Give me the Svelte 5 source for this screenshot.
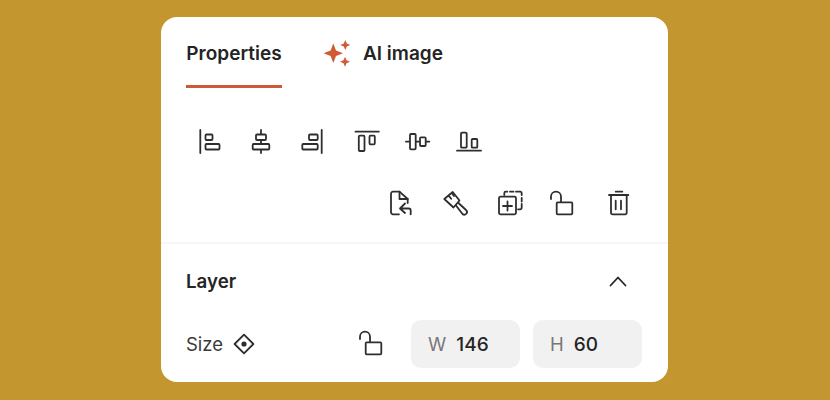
<script>
  const alignIcons = [
    { line: 'M4.3 2v23', rects: [[9.5, 6.5, 7, 5.5], [9.5, 16, 14, 5.5]] },
    { line: 'M14 2v23', rects: [[9, 6.5, 10, 5.5], [5.7, 16, 16.6, 5.5]] },
    { line: 'M23.7 2v23', rects: [[11, 6.5, 8.7, 5.5], [4.3, 16, 15.4, 5.5]] },
    { line: 'M2.5 3.7h23.3', rects: [[5.8, 7.7, 5.7, 15.3], [16.5, 7.7, 5.3, 8.6]] },
    { line: 'M2 13.7h23.3', rects: [[6, 6, 5.7, 15.3], [16, 9.3, 5.7, 8.7]] },
    { line: 'M2 22.7h24', rects: [[6, 4.7, 5.7, 15], [16.7, 11, 5.6, 8.7]] }
  ];
</script>

<div class="card">
  <div class="tabs">
    <div class="tab active">Properties</div>
    <div class="tab ai">
      <svg width="30" height="28" viewBox="0 0 30 28">
        <path class="spark" d="M10.3 4.6 13 11.6 20 14.3 13 17 10.3 24 7.6 17 .6 14.3 7.6 11.6Z" />
        <path class="spark" d="M22.3 1 23.8 4.5 27.3 6 23.8 7.5 22.3 11 20.8 7.5 17.3 6 20.8 4.5Z" />
        <path class="spark" d="M22 17.7 23.5 21.2 27 22.7 23.5 24.2 22 27.7 20.5 24.2 17 22.7 20.5 21.2Z" />
      </svg>
      <span>AI image</span>
    </div>
  </div>

  <div class="tools">
    <div class="align-row">
      {#each alignIcons as icon}
        <svg class="icon" viewBox="0 0 28 28">
          <path d={icon.line} />
          {#each icon.rects as r}
            <rect x={r[0]} y={r[1]} width={r[2]} height={r[3]} rx="1" />
          {/each}
        </svg>
      {/each}
    </div>
    <div class="action-row">
      <svg class="icon" viewBox="0 0 28 28">
        <path d="M13 24.3H7a2 2 0 0 1-2-2V3.7a2 2 0 0 1 2-2h6.5l8.2 7.3V13" />
        <path d="M13.5 1.7V9h8.2" />
        <path d="M24.7 24.3v-3.8a2 2 0 0 0-2-2H14M19 13.5l-5 5 5 4.5" />
      </svg>
      <svg class="icon" viewBox="0 0 28 28">
        <path d="M3.3 9 11.7 2l6.8 8.5-6 7Z" />
        <path d="m7.6 5.6 2.6 3.2M11.4 4l1.6 2" />
        <path d="m17.5 13 7.5 7a2.5 2.5 0 0 1-3.5 4L15 15.5" />
      </svg>
      <svg class="icon" viewBox="0 0 28 28">
        <rect x="3" y="6.7" width="17" height="17.6" rx="1.5" />
        <path d="M11.5 11.5v9M7 16h9" />
        <path d="M8.3 5V3.2a1.5 1.5 0 0 1 1.5-1.5h1.5M14 1.7h3.5M20 1.7h4.2a1.5 1.5 0 0 1 1.5 1.5V5M25.7 8v3.5M25.7 14v3.8a1.5 1.5 0 0 1-1.5 1.5H22" />
      </svg>
      <svg class="icon unlock" viewBox="0 0 28 28">
        <path d="M3 9V6.7a5 5 0 0 1 10 0v5.6" />
        <rect x="8.7" y="12.3" width="15.6" height="12" rx="1" />
      </svg>
      <svg class="icon trash" viewBox="0 0 28 28">
        <path d="M5 5h19.3M11.7 1.7h6.6M11.7 10.7v8.6M17 10.7v8.6" />
        <path d="M7 5v17.8a1.5 1.5 0 0 0 1.5 1.5h12.7a1.5 1.5 0 0 0 1.5-1.5V5" />
      </svg>
    </div>
  </div>

  <div class="layer">
    <div class="layer-head">
      <span>Layer</span>
      <svg class="chevron" width="18" height="11" viewBox="0 0 18 11">
        <path d="M1.5 9.5 9 1.5l7.5 8" />
      </svg>
    </div>
    <div class="size-row">
      <span class="size-label">Size</span>
      <svg class="diamond" width="22" height="22" viewBox="0 0 22 22">
        <path d="M11 1.6 20.4 11 11 20.4 1.6 11Z" />
        <circle cx="11" cy="11" r="2.6" />
      </svg>
      <svg class="icon lock" viewBox="0 0 28 28">
        <path d="M3 9V6.7a5 5 0 0 1 10 0v5.6" />
        <rect x="8.7" y="12.3" width="15.6" height="12" rx="1" />
      </svg>
      <div class="field"><span class="key">W</span><span class="val">146</span></div>
      <div class="field"><span class="key">H</span><span class="val">60</span></div>
    </div>
  </div>
</div>

<style>
  :global(body) {
    background: #c4962f;
  }

  .card {
    width: 507px;
    height: 365px;
    margin: 17px 0 0 161px;
    box-sizing: border-box;
    background: #fff;
    border-radius: 16px;
    font-family: Inter, sans-serif;
    color: #242424;
    overflow: hidden;
  }

  .tabs {
    display: flex;
    height: 71px;
    padding-left: 25px;
    gap: 41px;
    font-size: 19px;
    font-weight: 600;
  }

  .tab {
    display: flex;
    align-items: center;
    height: 64px;
    padding-top: 4px;
  }

  .tab.active {
    width: 96px;
    border-bottom: 3px solid #cc5a38;
    justify-content: center;
    white-space: nowrap;
  }

  .tab.ai {
    gap: 10px;
  }

  .spark {
    fill: #cf5a34;
  }

  .tools {
    height: 156px;
    border-bottom: 2px solid #f6f6f6;
    box-sizing: border-box;
  }

  .icon {
    width: 28px;
    height: 28px;
    flex: none;
    fill: none;
    stroke: #2e2e2e;
    stroke-width: 1.8;
    stroke-linecap: round;
    stroke-linejoin: round;
  }

  .icon rect {
    fill: #fff;
  }

  .align-row {
    display: flex;
    gap: 23px;
    padding: 40px 0 0 35px;
  }

  .align-row .icon:nth-child(4) {
    margin-left: 3.5px;
  }

  .action-row {
    display: flex;
    justify-content: flex-end;
    gap: 27px;
    padding: 34px 36px 0 0;
  }

  .unlock {
    margin-left: -3px;
  }

  .trash {
    margin-left: 1px;
  }

  .layer {
    padding: 0 26px 0 25px;
  }

  .layer-head {
    display: flex;
    justify-content: space-between;
    align-items: center;
    height: 75px;
    margin-bottom: 1px;
    font-size: 18.7px;
    font-weight: 600;
    padding-right: 15px;
  }

  .chevron {
    fill: none;
    stroke: #242424;
    stroke-width: 1.8;
    stroke-linecap: round;
    stroke-linejoin: round;
  }

  .size-row {
    display: flex;
    align-items: center;
    height: 48px;
    font-size: 18.5px;
  }

  .size-label {
    color: #3a3a3a;
  }

  .diamond {
    margin-left: 10px;
    fill: none;
    stroke: #2e2e2e;
    stroke-width: 1.8;
    stroke-linejoin: round;
  }

  .diamond circle {
    fill: #2e2e2e;
    stroke: none;
  }

  .lock {
    margin-left: 102px;
    margin-right: 26px;
  }

  .field {
    display: flex;
    align-items: center;
    width: 109px;
    height: 48px;
    box-sizing: border-box;
    padding-left: 17px;
    gap: 10px;
    background: #f1f1f1;
    border-radius: 10px;
  }

  .field + .field {
    margin-left: 13px;
  }

  .key {
    color: #777;
    font-weight: 400;
  }

  .val {
    color: #242424;
    font-weight: 500;
    font-size: 19px;
  }
</style>
